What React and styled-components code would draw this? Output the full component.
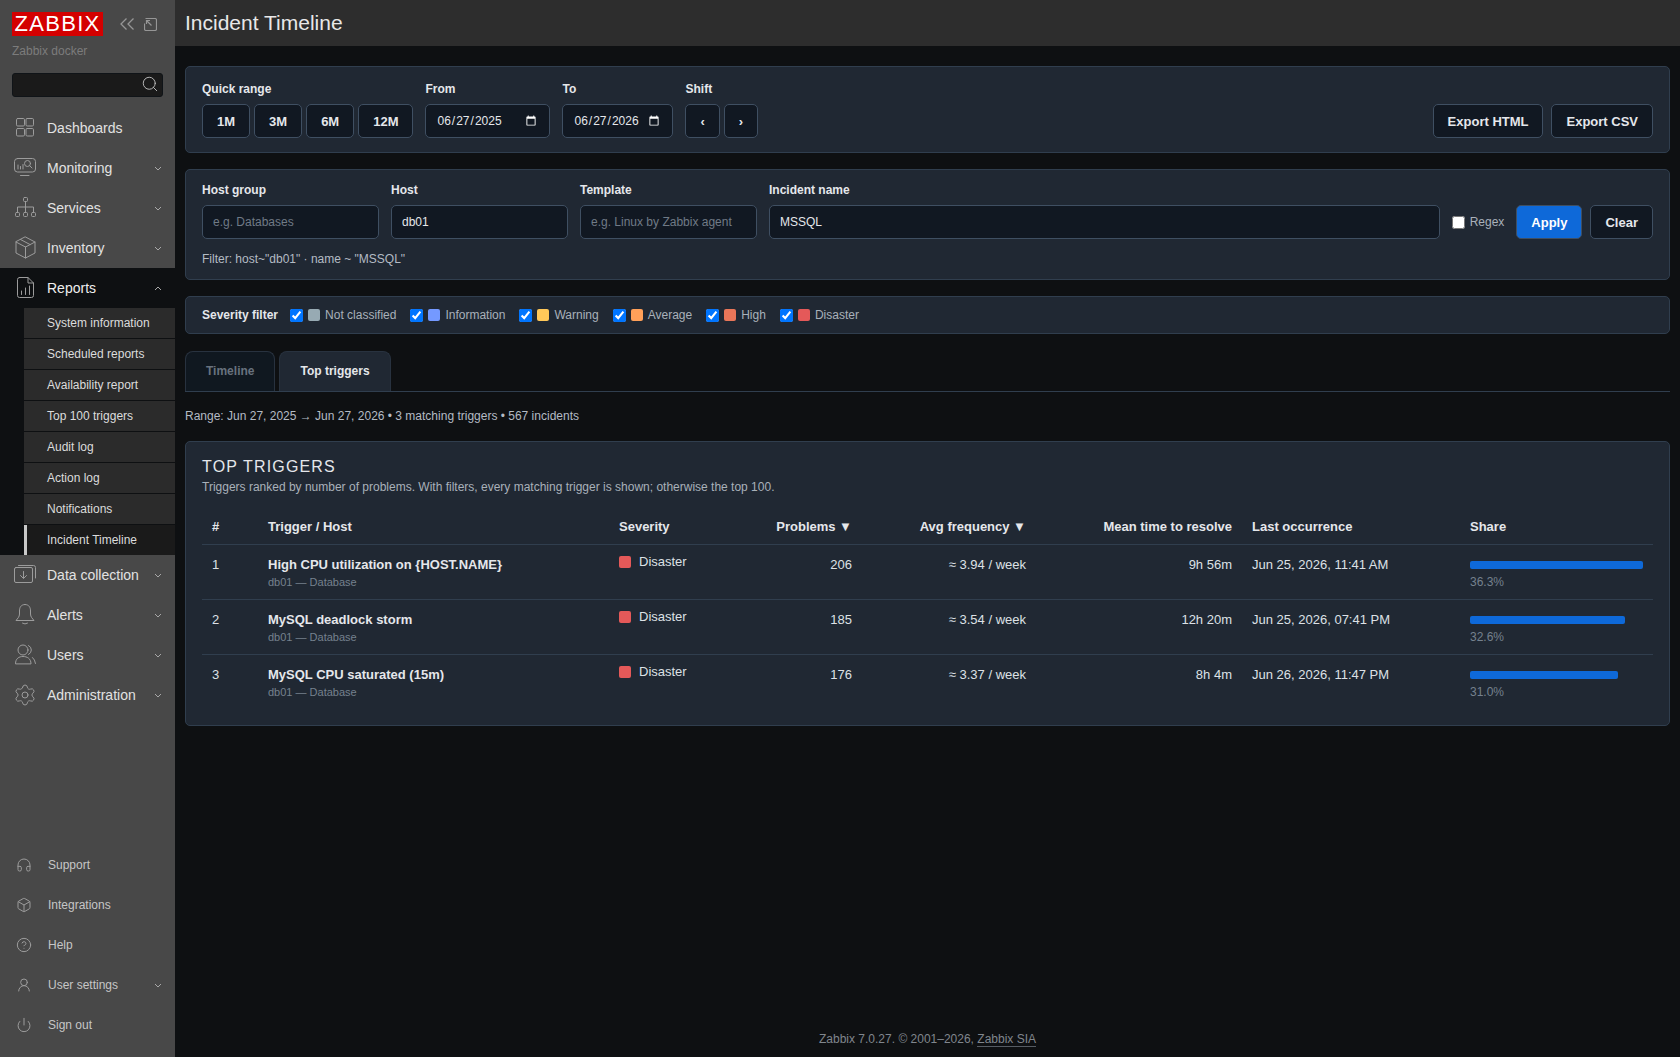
import styled, { createGlobalStyle } from "styled-components";
import { Settings, Headphones, Box, CircleHelp, UserRound, Power, Search } from "lucide-react";

const GlobalStyle = createGlobalStyle`
  * { box-sizing: border-box; }
  html, body { margin: 0; padding: 0; height: 100%; }
  body {
    background: #0e1012;
    font-family: "Liberation Sans", Arial, sans-serif;
    font-size: 12px;
    color: #e5e7eb;
  }
`;

const Layout = styled.div`
  display: flex;
  min-height: 1057px;
`;

/* ---- sidebar ---- */

const Sidebar = styled.aside`
  width: 175px;
  flex: none;
  background: #484848;
  display: flex;
  flex-direction: column;
  padding-bottom: 12px;
`;

const Brand = styled.div`
  display: flex;
  align-items: center;
  padding: 12px 0 0 12px;
  height: 36px;
`;

const Logo = styled.div`
  width: 91px;
  height: 24px;
  background: #d40000;
  color: #fff;
  font-size: 22px;
  line-height: 24px;
  text-align: center;
  letter-spacing: 1.3px;
`;

const BrandIcons = styled.div`
  display: flex;
  align-items: center;
  gap: 10px;
  margin-left: 17px;
  color: #969696;
`;

const ServerName = styled.div`
  padding: 8px 0 0 12px;
  font-size: 12px;
  line-height: 14px;
  color: #7c7c7c;
`;

const SearchBox = styled.div`
  position: relative;
  margin: 15px 12px 11px;
  height: 24px;
  background: #1a1a1a;
  border: 1px solid #101418;
  border-radius: 3px;
  color: #c4c4c4;

  svg {
    position: absolute;
    right: 3px;
    top: 1px;
  }
`;

const Menu = styled.nav`
  display: flex;
  flex-direction: column;
`;

const MenuRow = styled.div`
  height: 40px;
  display: flex;
  align-items: center;
  padding-left: 13px;
  padding-right: 13px;
  gap: 10px;
  font-size: 14px;
  background: ${({ open }) => (open ? "#0e1012" : "transparent")};
  color: ${({ open }) => (open ? "#eeeeee" : "#e2e2e2")};

  > svg:first-child {
    color: #9c9c9c;
    flex: none;
  }
`;

const MenuLabel = styled.span`
  flex: 1;
`;

const SubMenu = styled.div`
  background: #0e1012;
  padding-left: 24px;
`;

const SubItem = styled.div`
  height: ${({ active }) => (active ? "30px" : "31px")};
  display: flex;
  align-items: center;
  padding-left: ${({ active }) => (active ? "20px" : "23px")};
  font-size: 12px;
  color: #dcdcdc;
  background: ${({ active }) => (active ? "#1a1a1a" : "#2b2b2b")};
  border-bottom: ${({ active }) => (active ? "none" : "1px solid #0e1012")};
  border-left: ${({ active }) => (active ? "3px solid #c8c8c8" : "none")};
`;

const BottomMenu = styled.div`
  margin-top: auto;
  display: flex;
  flex-direction: column;
`;

const BottomRow = styled.div`
  height: 40px;
  display: flex;
  align-items: center;
  padding: 0 13px 0 16px;
  gap: 16px;
  font-size: 12px;
  color: #c6c6c6;

  > svg:first-child {
    color: #9c9c9c;
    flex: none;
  }
`;

/* ---- main ---- */

const Main = styled.main`
  flex: 1;
  min-width: 0;
  display: flex;
  flex-direction: column;
`;

const TopBar = styled.header`
  height: 46px;
  background: #2d2d2d;
  display: flex;
  align-items: center;
  padding-left: 10px;
`;

const PageTitle = styled.h1`
  margin: 0;
  font-size: 21px;
  font-weight: 400;
  color: #e8e8e8;
`;

const Content = styled.div`
  padding: 20px 10px 0;
  display: flex;
  flex-direction: column;
`;

const Card = styled.section`
  background: #202833;
  border: 1px solid #303e4e;
  border-radius: 5px;
  padding: ${({ pad }) => pad || "16px"};
  margin-bottom: ${({ mb }) => (mb ? `${mb}px` : "16px")};
`;

const FieldRow = styled.div`
  display: flex;
  align-items: flex-end;
  gap: 12px;
`;

const Field = styled.div`
  display: flex;
  flex-direction: column;
  gap: 7px;
  flex: ${({ grow }) => (grow ? "1" : "none")};
  width: ${({ w }) => (w ? `${w}px` : "auto")};
`;

const Label = styled.label`
  font-size: 12px;
  line-height: 15px;
  font-weight: 700;
  color: #e5e7eb;
`;

const ButtonGroup = styled.div`
  display: flex;
  gap: ${({ gap }) => gap || 4}px;
  margin-left: ${({ push }) => (push ? "auto" : "0")};
`;

const Button = styled.button`
  height: 34px;
  padding: 0 ${({ pad }) => pad ?? 14}px;
  font-family: inherit;
  font-size: 13px;
  font-weight: 700;
  color: ${({ primary }) => (primary ? "#ffffff" : "#e5e7eb")};
  background: ${({ primary }) => (primary ? "#0e69d9" : "#111822")};
  border: 1px solid #3f4f62;
  border-radius: 5px;
`;

const TextInput = styled.input`
  width: 100%;
  height: 34px;
  padding: 0 10px;
  font-family: inherit;
  font-size: 12px;
  color: #e5e7eb;
  background: #111822;
  border: 1px solid #3f4f62;
  border-radius: 5px;
  outline: none;

  &[type="date"] {
    color-scheme: dark;
  }

  &::placeholder {
    color: #707a86;
    opacity: 1;
  }
`;

const RegexLabel = styled.label`
  height: 34px;
  display: flex;
  align-items: center;
  gap: 5px;
  font-size: 12px;
  color: #a9b1ba;

  input {
    margin: 0;
    width: 13px;
    height: 13px;
  }
`;

const FilterNote = styled.div`
  margin-top: 13px;
  font-size: 12px;
  line-height: 14px;
  color: #b4bbc4;
`;

const SeverityBar = styled.div`
  display: flex;
  align-items: center;
  gap: 12px;
  height: 36px;
  padding: 0 16px;
`;

const SeverityTitle = styled.span`
  font-weight: 700;
  color: #e5e7eb;
`;

const SeverityOption = styled.label`
  display: flex;
  align-items: center;
  gap: 5px;
  margin-right: 2px;
  color: #a9b1ba;

  input {
    margin: 0;
    width: 13px;
    height: 13px;
  }
`;

const Swatch = styled.span`
  width: 12px;
  height: 12px;
  border-radius: 2px;
  flex: none;
  background: ${({ color }) => color};
`;

const Tabs = styled.div`
  display: flex;
  gap: 4px;
  height: 41px;
  border-bottom: 1px solid #303e4e;
`;

const Tab = styled.div`
  height: 40px;
  display: flex;
  align-items: center;
  padding: 0 20px 2px;
  font-size: 12px;
  font-weight: 700;
  color: ${({ active }) => (active ? "#e5e7eb" : "#68727e")};
  background: ${({ active }) => (active ? "#202833" : "#101820")};
  border: 1px solid #28323f;
  border-bottom: none;
  border-radius: 8px 8px 0 0;
`;

const RangeNote = styled.div`
  margin: 17px 0 18px;
  line-height: 14px;
  color: #b4bbc4;
`;

const SectionTitle = styled.h2`
  margin: 0;
  font-size: 16px;
  line-height: 18px;
  font-weight: 400;
  letter-spacing: 1.15px;
  color: #e5e7eb;
`;

const SectionNote = styled.p`
  margin: 4px 0 0;
  font-size: 12px;
  line-height: 14px;
  color: #a9b1ba;
`;

const Table = styled.table`
  width: 100%;
  margin-top: 14px;
  border-collapse: collapse;
  table-layout: fixed;
  font-size: 13px;
`;

const Th = styled.th`
  height: 36px;
  padding: 2px 10px 0;
  font-weight: 700;
  color: #e5e7eb;
  text-align: ${({ right }) => (right ? "right" : "left")};
  border-bottom: 1px solid #303e4e;
`;

const Tr = styled.tr`
  & + & td {
    border-top: 1px solid #303e4e;
  }
`;

const Td = styled.td`
  height: 55px;
  padding: 12px 10px 0;
  vertical-align: top;
  line-height: 16px;
  color: #dde1e6;
  text-align: ${({ right }) => (right ? "right" : "left")};
`;

const TriggerName = styled.div`
  font-weight: 700;
  color: #e5e7eb;
`;

const Muted = styled.div`
  margin-top: ${({ top }) => top ?? 2}px;
  font-size: ${({ size }) => size || 11}px;
  line-height: 14px;
  color: #75818e;
`;

const SeverityCell = styled.div`
  display: flex;
  align-items: center;
  gap: 8px;
  margin-top: -3px;
`;

const ShareTrack = styled.div`
  height: 8px;
  margin: 4px 0 0;
`;

const ShareFill = styled.div`
  height: 100%;
  border-radius: 2px;
  background: #0e69d9;
`;

const Footer = styled.footer`
  margin-top: auto;
  padding-bottom: 11px;
  text-align: center;
  font-size: 12px;
  line-height: 14px;
  color: #80868d;

  span {
    border-bottom: 1px solid #565c63;
  }
`;

/* ---- drawn icons ---- */

const Line = ({ children, size = 24 }) => (
  <svg width={size} height={size} viewBox="0 0 24 24" fill="none" stroke="currentColor" strokeWidth="1" strokeLinecap="round" strokeLinejoin="round">
    {children}
  </svg>
);

const DashboardsIcon = () => (
  <Line>
    <rect x="3.5" y="2.5" width="8" height="7.5" rx="1.2" />
    <rect x="13" y="2.5" width="7.5" height="7.5" rx="1.2" />
    <rect x="3.5" y="12.5" width="8" height="7.5" rx="1.2" />
    <rect x="13" y="12.5" width="7.5" height="7.5" rx="1.2" />
  </Line>
);

const MonitoringIcon = () => (
  <Line>
    <rect x="1.5" y="2.5" width="21" height="13.5" rx="3" />
    <path d="M7.5 19.5H16M5 9v4M7.5 10.5V13M10 8.5V13" />
    <circle cx="14.5" cy="7.5" r="3" />
    <path d="M16.7 9.7L19 12" />
  </Line>
);

const ServicesIcon = () => (
  <Line>
    <rect x="10.5" y="1.5" width="4" height="4" rx="1" />
    <rect x="2.5" y="16.5" width="4" height="4" rx="1" />
    <rect x="10.5" y="16.5" width="4" height="4" rx="1" />
    <rect x="18.5" y="16.5" width="4" height="4" rx="1" />
    <path d="M12.5 5.5V16.5M4.5 16.5V11H20.5V16.5" />
  </Line>
);

const InventoryIcon = () => (
  <Line>
    <path d="M12.5 1L22 6v11l-9.5 5L3 17V6z" />
    <path d="M3 6l9.5 5L22 6M12.5 11v11M7.5 3.5L17 8.5" />
  </Line>
);

const ReportsIcon = () => (
  <Line>
    <path d="M6.5 1.5H15L20.5 7v12.5a2 2 0 0 1-2 2h-12a2 2 0 0 1-2-2v-16a2 2 0 0 1 2-2z" />
    <path d="M15 1.5V7h5.5M8.5 15v3.5M12.5 12v6.5M16.5 10v8.5" />
  </Line>
);

const DataIcon = () => (
  <Line>
    <rect x="1.5" y="4.5" width="18" height="15" rx="1.5" />
    <path d="M5.5 2.5H20.5a2 2 0 0 1 2 2V15M10.5 8.5V15M7.5 12.5l3 3 3-3" />
  </Line>
);

const BellIcon = () => (
  <Line>
    <path d="M12 1.5C7.5 1.5 6.5 5 6.5 8v3c0 3-2 4.5-3.5 6.5h18c-1.5-2-3.5-3.5-3.5-6.5V8c0-3-1-6.500-5.500-6.500z" />
    <path d="M9.5 20.2q2.5 1.6 5 0" />
  </Line>
);

const UsersIcon = () => (
  <Line>
    <circle cx="10" cy="7" r="5" />
    <path d="M2.5 20.5c0-5 3.5-7 7.5-7s8 2 8 7zM15.5 2.5a5 5 0 0 1 0 9M19.5 14.5q2.5 2 3 6" />
  </Line>
);

const Chevron = ({ up }) => (
  <svg width="8" height="5" viewBox="0 0 8 5" fill="none" stroke="#a8a8a8" strokeWidth="1">
    <path d={up ? "M1 4l3-3 3 3" : "M1 1l3 3 3-3"} />
  </svg>
);

const CollapseIcon = () => (
  <svg width="14" height="12" viewBox="0 0 14 12" fill="none" stroke="currentColor" strokeWidth="1.3">
    <path d="M6.5 0.5L1 6l5.5 5.5M13.5 0.5L8 6l5.5 5.5" />
  </svg>
);

const ExpandIcon = () => (
  <svg width="13" height="13" viewBox="0 0 13 13" fill="none" stroke="currentColor" strokeWidth="1.2">
    <path d="M0.5 5.5V11A1.5 1.5 0 0 0 2 12.5h9a1.5 1.5 0 0 0 1.5-1.5V2A1.5 1.5 0 0 0 11 0.5H1.5" />
    <path d="M7.5 7.5L2.5 2.5M2.5 6V2.5H6" />
  </svg>
);

/* ---- data ---- */

const reportItems = [
  "System information",
  "Scheduled reports",
  "Availability report",
  "Top 100 triggers",
  "Audit log",
  "Action log",
  "Notifications",
  "Incident Timeline",
];

const severities = [
  ["Not classified", "#97aab3"],
  ["Information", "#7499ff"],
  ["Warning", "#ffc859"],
  ["Average", "#ffa059"],
  ["High", "#e97659"],
  ["Disaster", "#e45959"],
];

const triggers = [
  { id: 1, name: "High CPU utilization on {HOST.NAME}", problems: 206, freq: "≈ 3.94 / week", mttr: "9h 56m", last: "Jun 25, 2026, 11:41 AM", share: 36.3 },
  { id: 2, name: "MySQL deadlock storm", problems: 185, freq: "≈ 3.54 / week", mttr: "12h 20m", last: "Jun 25, 2026, 07:41 PM", share: 32.6 },
  { id: 3, name: "MySQL CPU saturated (15m)", problems: 176, freq: "≈ 3.37 / week", mttr: "8h 4m", last: "Jun 26, 2026, 11:47 PM", share: 31.0 },
];

function App() {
  return (
    <Layout>
      <GlobalStyle />
      <Sidebar>
        <Brand>
          <Logo>ZABBIX</Logo>
          <BrandIcons>
            <CollapseIcon />
            <ExpandIcon />
          </BrandIcons>
        </Brand>
        <ServerName>Zabbix docker</ServerName>
        <SearchBox>
          <Search size={18} strokeWidth={1.2} />
        </SearchBox>
        <Menu>
          <MenuRow><DashboardsIcon /><MenuLabel>Dashboards</MenuLabel></MenuRow>
          <MenuRow><MonitoringIcon /><MenuLabel>Monitoring</MenuLabel><Chevron /></MenuRow>
          <MenuRow><ServicesIcon /><MenuLabel>Services</MenuLabel><Chevron /></MenuRow>
          <MenuRow><InventoryIcon /><MenuLabel>Inventory</MenuLabel><Chevron /></MenuRow>
          <MenuRow open><ReportsIcon /><MenuLabel>Reports</MenuLabel><Chevron up /></MenuRow>
          <SubMenu>
            {reportItems.map((item) => (
              <SubItem key={item} active={item === "Incident Timeline"}>{item}</SubItem>
            ))}
          </SubMenu>
          <MenuRow><DataIcon /><MenuLabel>Data collection</MenuLabel><Chevron /></MenuRow>
          <MenuRow><BellIcon /><MenuLabel>Alerts</MenuLabel><Chevron /></MenuRow>
          <MenuRow><UsersIcon /><MenuLabel>Users</MenuLabel><Chevron /></MenuRow>
          <MenuRow><Settings size={24} strokeWidth={1} /><MenuLabel>Administration</MenuLabel><Chevron /></MenuRow>
        </Menu>
        <BottomMenu>
          <BottomRow><Headphones size={16} strokeWidth={1.5} /><MenuLabel>Support</MenuLabel></BottomRow>
          <BottomRow><Box size={16} strokeWidth={1.5} /><MenuLabel>Integrations</MenuLabel></BottomRow>
          <BottomRow><CircleHelp size={16} strokeWidth={1.5} /><MenuLabel>Help</MenuLabel></BottomRow>
          <BottomRow><UserRound size={16} strokeWidth={1.5} /><MenuLabel>User settings</MenuLabel><Chevron /></BottomRow>
          <BottomRow><Power size={16} strokeWidth={1.5} /><MenuLabel>Sign out</MenuLabel></BottomRow>
        </BottomMenu>
      </Sidebar>

      <Main>
        <TopBar>
          <PageTitle>Incident Timeline</PageTitle>
        </TopBar>
        <Content>
          <Card pad="15px 16px 14px">
            <FieldRow>
              <Field>
                <Label>Quick range</Label>
                <ButtonGroup>
                  <Button>1M</Button>
                  <Button>3M</Button>
                  <Button>6M</Button>
                  <Button>12M</Button>
                </ButtonGroup>
              </Field>
              <Field w={125}>
                <Label>From</Label>
                <TextInput type="date" defaultValue="2025-06-27" />
              </Field>
              <Field w={111}>
                <Label>To</Label>
                <TextInput type="date" defaultValue="2026-06-27" />
              </Field>
              <Field>
                <Label>Shift</Label>
                <ButtonGroup>
                  <Button pad={14}>‹</Button>
                  <Button pad={14}>›</Button>
                </ButtonGroup>
              </Field>
              <ButtonGroup push gap={8}>
                <Button>Export HTML</Button>
                <Button>Export CSV</Button>
              </ButtonGroup>
            </FieldRow>
          </Card>

          <Card pad="13px 16px 13px">
            <FieldRow>
              <Field w={177}>
                <Label>Host group</Label>
                <TextInput placeholder="e.g. Databases" />
              </Field>
              <Field w={177}>
                <Label>Host</Label>
                <TextInput defaultValue="db01" />
              </Field>
              <Field w={177}>
                <Label>Template</Label>
                <TextInput placeholder="e.g. Linux by Zabbix agent" />
              </Field>
              <Field grow>
                <Label>Incident name</Label>
                <TextInput defaultValue="MSSQL" />
              </Field>
              <RegexLabel>
                <input type="checkbox" />
                Regex
              </RegexLabel>
              <ButtonGroup gap={8}>
                <Button primary>Apply</Button>
                <Button>Clear</Button>
              </ButtonGroup>
            </FieldRow>
            <FilterNote>Filter: host~"db01" · name ~ "MSSQL"</FilterNote>
          </Card>

          <Card pad="0" mb={17}>
            <SeverityBar>
              <SeverityTitle>Severity filter</SeverityTitle>
              {severities.map(([name, color]) => (
                <SeverityOption key={name}>
                  <input type="checkbox" defaultChecked />
                  <Swatch color={color} />
                  {name}
                </SeverityOption>
              ))}
            </SeverityBar>
          </Card>

          <Tabs>
            <Tab>Timeline</Tab>
            <Tab active>Top triggers</Tab>
          </Tabs>

          <RangeNote>Range: Jun 27, 2025 → Jun 27, 2026 • 3 matching triggers • 567 incidents</RangeNote>

          <Card>
            <SectionTitle>TOP TRIGGERS</SectionTitle>
            <SectionNote>Triggers ranked by number of problems. With filters, every matching trigger is shown; otherwise the top 100.</SectionNote>
            <Table>
              <colgroup>
                <col width="56" />
                <col width="351" />
                <col width="110" />
                <col width="143" />
                <col width="174" />
                <col width="206" />
                <col width="218" />
                <col width="193" />
              </colgroup>
              <thead>
                <tr>
                  <Th>#</Th>
                  <Th>Trigger / Host</Th>
                  <Th>Severity</Th>
                  <Th right>Problems ▼</Th>
                  <Th right>Avg frequency ▼</Th>
                  <Th right>Mean time to resolve</Th>
                  <Th>Last occurrence</Th>
                  <Th>Share</Th>
                </tr>
              </thead>
              <tbody>
                {triggers.map((t) => (
                  <Tr key={t.id}>
                    <Td>{t.id}</Td>
                    <Td>
                      <TriggerName>{t.name}</TriggerName>
                      <Muted>db01 — Database</Muted>
                    </Td>
                    <Td>
                      <SeverityCell>
                        <Swatch color="#e45959" />
                        Disaster
                      </SeverityCell>
                    </Td>
                    <Td right>{t.problems}</Td>
                    <Td right>{t.freq}</Td>
                    <Td right>{t.mttr}</Td>
                    <Td>{t.last}</Td>
                    <Td>
                      <ShareTrack>
                        <ShareFill style={{ width: `${(t.share / 36.3) * 100}%` }} />
                      </ShareTrack>
                      <Muted size={12} top={6}>{t.share.toFixed(1)}%</Muted>
                    </Td>
                  </Tr>
                ))}
              </tbody>
            </Table>
          </Card>
        </Content>
        <Footer>
          Zabbix 7.0.27. © 2001–2026, <span>Zabbix SIA</span>
        </Footer>
      </Main>
    </Layout>
  );
}

export default App;
